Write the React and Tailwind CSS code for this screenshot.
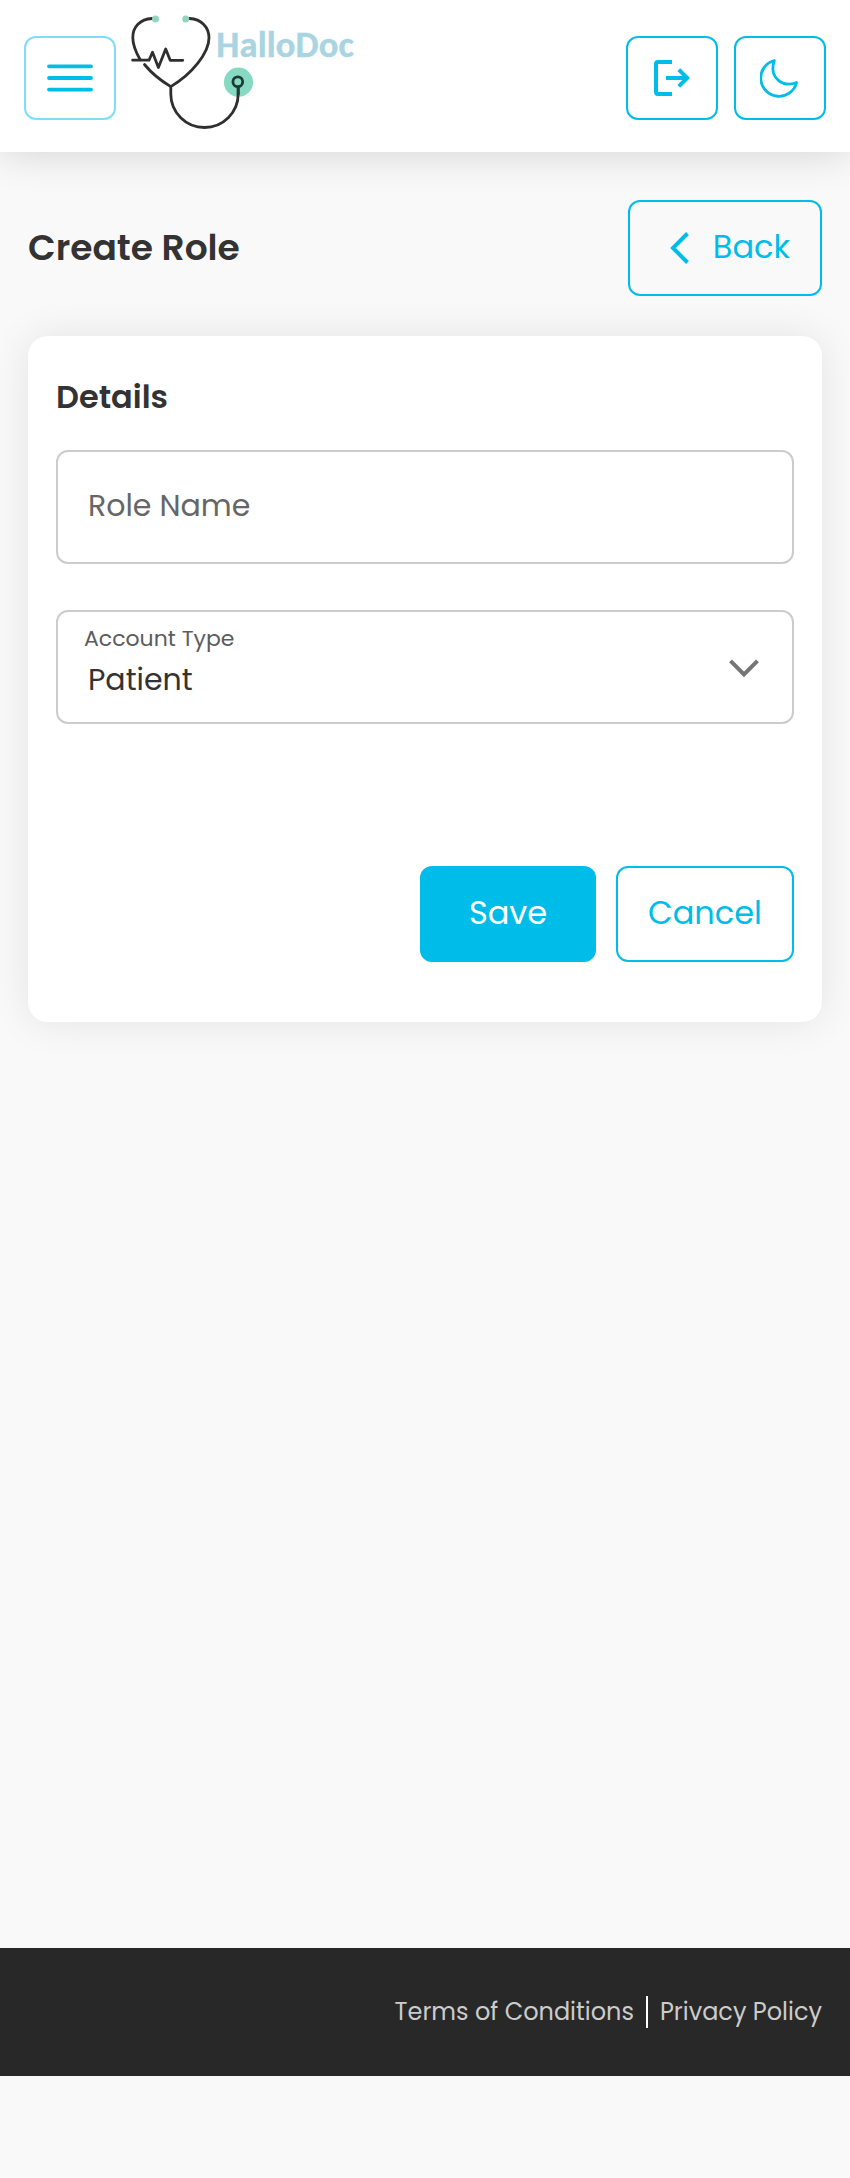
function Logo() {
  return (
    <svg className="block h-[120px] w-[232px]" viewBox="128 12 232 120" fill="none" role="img" aria-label="HalloDoc">
      <circle cx="238.5" cy="82.2" r="14.6" fill="#86d9c2" />
      <g stroke="#2f2f2f" strokeWidth="2.8" strokeLinecap="round" strokeLinejoin="round">
        <path d="M152 18.5C140 19.1 132.8 27 132.8 37.5C132.8 45 136 52.5 140.2 59.8" />
        <path d="M144.5 64.5C151 72.5 160.5 80.5 170.8 86.6" />
        <path d="M189.5 18.5C201.5 19.1 209 27.5 209 37.8C209 53 192 74 170.8 86.6V94C170.8 112.5 186 127.5 204.5 127.5C223 127.5 238.2 112.5 238.2 94V87.5" />
        <path d="M132.6 60.2H149L152.5 52.2L158.4 67.5L165.7 49L170.2 60.3H182.8" />
      </g>
      <circle cx="237.8" cy="81.8" r="4.9" stroke="#1d3b34" strokeWidth="2.8" />
      <path d="M238.2 87.5V95" stroke="#1d3b34" strokeWidth="2.8" />
      <circle cx="155.5" cy="18.9" r="3.5" fill="#93d3c0" />
      <circle cx="185.7" cy="18.9" r="3.5" fill="#93d3c0" />
      <text x="216.3" y="57.3" textLength="137.5" className="fill-[#a9d4e1] stroke-[#a9d4e1] stroke-[0.4px] font-['Carlito','Lato',sans-serif] text-[36.5px] font-bold">HalloDoc</text>
    </svg>
  );
}

function IconButton({ label, light, children }) {
  return (
    <button
      aria-label={label}
      className={`flex h-[84px] w-[92px] items-center justify-center rounded-xl border-2 text-[#00bce9] ${light ? "border-[#7fddf6]" : "border-[#00bce9]"}`}
    >
      {children}
    </button>
  );
}

function Header() {
  return (
    <header className="flex h-[152px] items-center bg-white px-6 shadow-[0_0_40px_rgba(0,0,0,0.16)]">
      <div className="flex w-full items-center pt-1">
        <IconButton label="Menu" light>
          <svg className="h-8 w-12" viewBox="0 0 48 32" stroke="currentColor" strokeWidth="3.8" strokeLinecap="round">
            <path d="M3 4.3H45M3 16H45M3 27.6H45" />
          </svg>
        </IconButton>
        <div className="-mt-3 ml-3">
          <Logo />
        </div>
        <div className="ml-auto flex gap-4">
          <IconButton label="Log out">
            <svg className="size-10" viewBox="652 58 40 40" fill="none" stroke="currentColor" strokeWidth="4">
              <path d="M672 62H658Q656 62 656 64V92Q656 94 658 94H672" />
              <path d="M666 78H687" />
              <path d="M678.8 69.6L687.2 78L678.8 86.4" />
            </svg>
          </IconButton>
          <IconButton label="Dark mode">
            <svg className="size-10" viewBox="760 58 40 40" fill="none" stroke="currentColor" strokeWidth="2.8" strokeLinejoin="round">
              <path d="M774.3 60.5A18.2 18.2 0 1 0 796.6 82.5C783 88 768.5 78 774.3 60.5Z" />
            </svg>
          </IconButton>
        </div>
      </div>
    </header>
  );
}

export default function App() {
  return (
    <div className="flex min-h-[2178px] w-full flex-col bg-[#f9f9f9] font-['Poppins','Inter',sans-serif] text-[#333]">
      <Header />
      <main className="flex-1 px-7 pt-12">
        <div className="flex h-24 items-center justify-between">
          <h1 className="text-4xl leading-none font-semibold">Create Role</h1>
          <button className="flex h-24 w-[194px] items-center justify-between rounded-xl border-2 border-[#00bce9] pr-[30px] pl-10 text-[32px] leading-none text-[#00bce9]">
            <svg className="h-8 w-5" viewBox="0 0 20 32" fill="none" stroke="currentColor" strokeWidth="4">
              <path d="M17.5 1.5L3 16L17.5 30.5" />
            </svg>
            <span className="-mt-0.5">Back</span>
          </button>
        </div>
        <section className="mt-10 h-[686px] rounded-[20px] bg-white px-7 pt-[45px] shadow-[0_0_40px_rgba(0,0,0,0.09)]">
          <h2 className="text-[32px] leading-8 font-semibold">Details</h2>
          <div className="mt-[37px] flex h-[114px] items-center rounded-xl border-2 border-[#ccc] pl-[30px] text-3xl leading-none text-[#666]">
            <span className="-mt-0.5">Role Name</span>
          </div>
          <div className="mt-[46px] flex h-[114px] justify-between rounded-xl border-2 border-[#ccc] pr-8">
            <div className="pt-4">
              <div className="pl-[26px] text-[22px] leading-[22px] text-[#5c5c5c]">Account Type</div>
              <div className="mt-[15px] pl-[30px] text-3xl leading-[30px] text-[#333]">Patient</div>
            </div>
            <svg className="mt-[45px] h-6 w-8" viewBox="0 0 32 24" fill="none" stroke="#757575" strokeWidth="4">
              <path d="M2.5 3.8L16 17.3L29.5 3.8" />
            </svg>
          </div>
          <div className="mt-[142px] flex justify-end gap-5 text-[32px] leading-none">
            <button className="h-24 w-44 rounded-xl bg-[#00bce9] pb-0.5 text-white">Save</button>
            <button className="h-24 w-[178px] rounded-xl border-2 border-[#00bce9] pb-0.5 text-[#00bce9]">Cancel</button>
          </div>
        </section>
      </main>
      <footer className="mb-[102px] flex h-32 items-center justify-end bg-[#282828] pr-7 text-2xl leading-8 text-[#ccc]">
        <span className="pr-3">Terms of Conditions</span>
        <span className="h-8 w-0.5 bg-white" />
        <span className="pl-3">Privacy Policy</span>
      </footer>
    </div>
  );
}
